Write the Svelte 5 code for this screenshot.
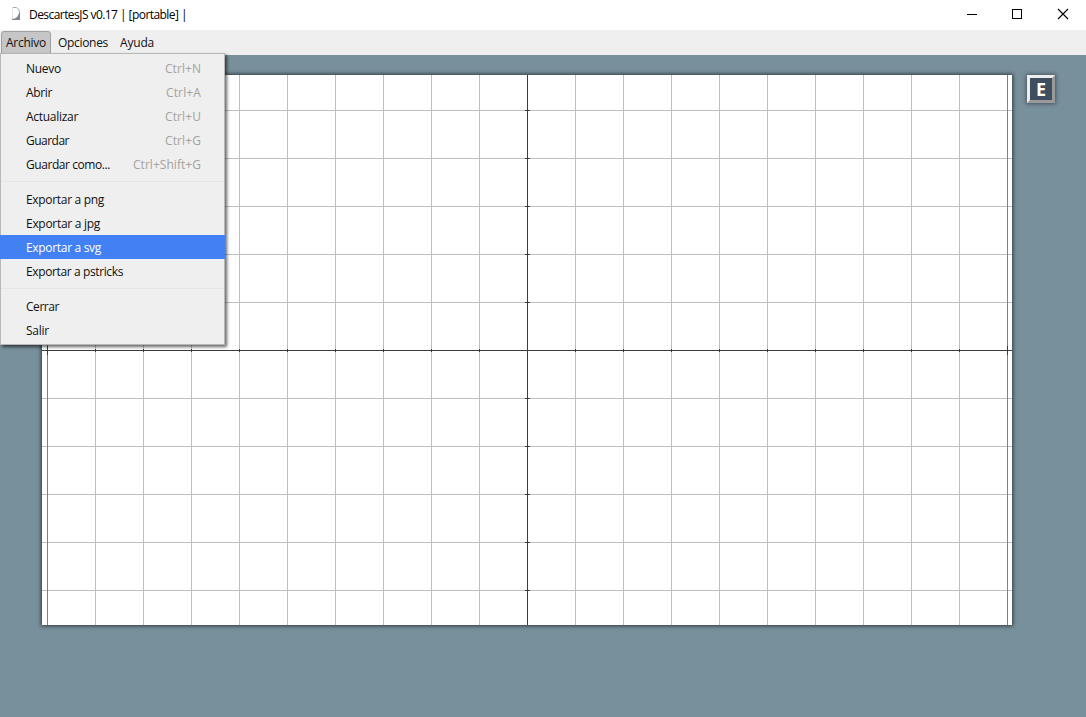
<script>
  const groups = [
    [
      { t: 'Nuevo', w: 35, k: 'Ctrl+N', kw: 36 },
      { t: 'Abrir', w: 26, k: 'Ctrl+A', kw: 35 },
      { t: 'Actualizar', w: 52, k: 'Ctrl+U', kw: 36 },
      { t: 'Guardar', w: 43, k: 'Ctrl+G', kw: 36 },
      { t: 'Guardar como...', w: 84, k: 'Ctrl+Shift+G', kw: 68 }
    ],
    [
      { t: 'Exportar a png', w: 78 },
      { t: 'Exportar a jpg', w: 74 },
      { t: 'Exportar a svg', w: 75, active: true },
      { t: 'Exportar a pstricks', w: 97 }
    ],
    [
      { t: 'Cerrar', w: 33 },
      { t: 'Salir', w: 23 }
    ]
  ];
  const xs = Array.from({ length: 19 }, (_, i) => 53 + i * 48);
  const ys = Array.from({ length: 11 }, (_, i) => 35 + i * 48);

  // Spreads or tightens a label so that it takes exactly the given width.
  function fit(node, width) {
    const natural = node.getBoundingClientRect().width;
    node.style.letterSpacing = (width - natural) / node.textContent.length + 'px';
  }
</script>

<div class="window">
  <header class="titlebar">
    <svg class="logo" width="10" height="14" viewBox="0 0 10 14">
      <path d="M0 0.5H4.5Q7.5 2 7.5 5V8" fill="none" stroke="#a4a9b1" />
      <path d="M0.5 0V12" stroke="#e3e5e8" />
      <path d="M8 6V13H0V12Q3 11.8 5 10Q6.5 8.5 7 6Z" fill="#808791" />
    </svg>
    <span class="title" use:fit={158}>DescartesJS v0.17 | [portable] |</span>
    <div class="controls">
      <svg width="46" height="30" viewBox="0 0 46 30" shape-rendering="crispEdges"><path d="M17 14.5H27" stroke="#000" /></svg>
      <svg width="46" height="30" viewBox="0 0 46 30" shape-rendering="crispEdges"><path d="M16.5 9.5H25.5V18.5H16.5Z" stroke="#000" fill="none" /></svg>
      <svg width="46" height="30" viewBox="0 0 46 30"><path d="M16 9L26 19M26 9L16 19" stroke="#000" stroke-width="1.1" /></svg>
    </div>
  </header>

  <nav class="menubar">
    <div class="entry open"><span use:fit={40}>Archivo</span>
      <div class="menu">
        {#each groups as group, g}
          {#if g}<div class="separator"></div>{/if}
          {#each group as item}
            <div class="item" class:active={item.active}>
              <span use:fit={item.w}>{item.t}</span>
              {#if item.k}<span class="key" use:fit={item.kw}>{item.k}</span>{/if}
            </div>
          {/each}
        {/each}
      </div>
    </div>
    <div class="entry"><span use:fit={50}>Opciones</span></div>
    <div class="entry last"><span use:fit={34}>Ayuda</span></div>
  </nav>

  <main>
    <div class="sheet">
      <svg width="970" height="550" viewBox="0 0 970 550" shape-rendering="crispEdges">
        <g fill="#bdbdbd">
          {#each xs as x}<rect {x} y="0" width="1" height="550" />{/each}
          {#each ys as y}<rect x="0" {y} width="970" height="1" />{/each}
        </g>
        <g fill="#808080">
          <rect x="5" y="0" width="1" height="550" />
          <rect x="965" y="0" width="1" height="550" />
        </g>
        <g fill="#3c3c3c">
          <rect x="485" y="0" width="1" height="550" />
          <rect x="0" y="275" width="970" height="1" />
          {#each xs as x}<rect {x} y="274" width="1" height="3" />{/each}
          {#each ys as y}<rect x="483" {y} width="5" height="1" />{/each}
          <rect x="5" y="271" width="1" height="9" />
          <rect x="965" y="271" width="1" height="9" />
        </g>
      </svg>
    </div>
    <div class="edit">E</div>
  </main>
</div>

<style>
  :global(body) { overflow: hidden; }
  .window {
    width: 1086px; height: 717px; display: flex; flex-direction: column;
    font: 12px/24px "Open Sans", "Noto Sans", sans-serif; color: #111;
    background: #78909c; overflow: hidden; white-space: nowrap;
  }
  span { display: inline-block; }
  .titlebar { height: 30px; flex: none; display: flex; align-items: center; background: #fff; color: #000; }
  .title { line-height: 24px; }
  .logo { margin: 0 7px 2px 12px; }
  .controls { display: flex; margin-left: auto; margin-right: -2px; }
  .menubar { height: 25px; flex: none; display: flex; align-items: flex-start; padding: 1px 0 0 1px; box-sizing: border-box; background: #efefef; }
  .entry { position: relative; box-sizing: border-box; height: 23px; line-height: 22px; padding: 0 6px; border: 1px solid transparent; }
  .entry.open { width: 50px; padding: 0 4px; background: #c6c6c6; border-color: #a0a0a0; border-radius: 3px 3px 0 0; }
  .entry.last { padding-left: 4px; }
  .menu {
    position: absolute; left: -2px; top: 21px; z-index: 2; box-sizing: border-box;
    width: 225px; height: 292px; padding: 2px 0; line-height: 26px;
    background: #efefef; border: 1px solid #b8b8b8; box-shadow: 2px 2px 3px rgba(0, 0, 0, 0.6);
  }
  .item { display: flex; justify-content: space-between; height: 24px; margin: 0 -1px; padding: 0 24px 0 26px; }
  .key { color: #a3a39d; }
  .active { background: #4281f4; color: #fff; }
  .separator { height: 1px; margin: 5px 0; background: #e5e5e5; }
  main { flex: 1; display: flex; align-items: flex-start; gap: 15px; padding: 20px 0 0 42px; }
  .sheet { width: 970px; height: 550px; background: #fff; box-shadow: 0 0 4px 1px rgba(0, 0, 0, 0.6); }
  .sheet svg { display: block; }
  .edit {
    box-sizing: border-box; width: 28px; height: 28px; border: 3px solid; border-color: #eee #9a9a9a #9a9a9a #eee;
    background: #3e4e5e; color: #fff; text-align: center; font-size: 18px; line-height: 23px; font-weight: 700;
    font-family: "Open Sans", sans-serif; box-shadow: 0 0 4px 1px rgba(0, 0, 0, 0.4);
  }
</style>
